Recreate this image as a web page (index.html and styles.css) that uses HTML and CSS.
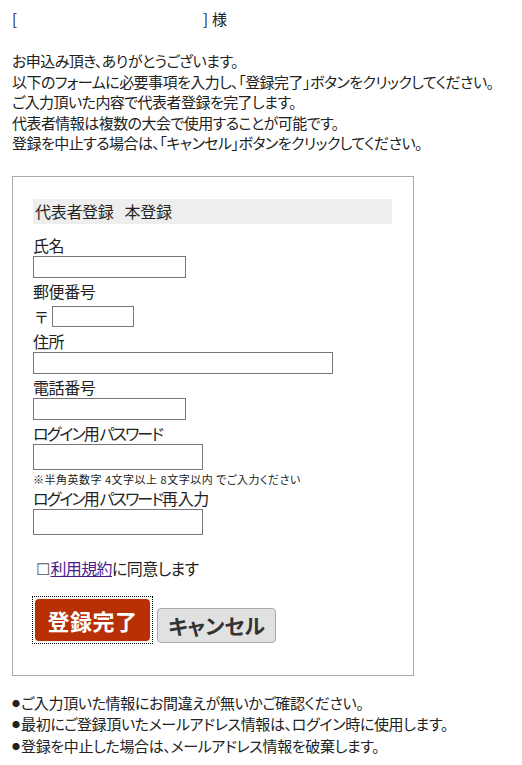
FILE: index.html
```html
<!DOCTYPE html>
<html lang="ja">
<head>
<meta charset="utf-8">
<link rel="stylesheet" href="styles.css">
</head>
<body>
<div class="page">
  <p class="name-line"><span class="br-open">[</span><span class="br-close">]</span> 様</p>
  <div class="intro">
    <p>お申込み頂き、ありがとうございます。</p>
    <p>以下のフォームに必要事項を入力し、「登録完了」ボタンをクリックしてください。</p>
    <p>ご入力頂いた内容で代表者登録を完了します。</p>
    <p>代表者情報は複数の大会で使用することが可能です。</p>
    <p>登録を中止する場合は、「キャンセル」ボタンをクリックしてください。</p>
  </div>
  <div class="box">
    <div class="heading"><span>代表者登録</span><span>本登録</span></div>
    <div class="label">氏名</div>
    <input class="field w153" type="text">
    <div class="label">郵便番号</div>
    <div class="zip-row"><span class="zip-mark">〒</span><input class="field w82 h21" type="text"></div>
    <div class="label">住所</div>
    <input class="field w300" type="text">
    <div class="label">電話番号</div>
    <input class="field w153" type="text">
    <div class="label"><span class="kana">ログイン</span>用<span class="kana">パスワード</span></div>
    <input class="field w170 h26" type="password">
    <div class="note">※半角英数字 4文字以上 8文字以内 でご入力ください</div>
    <div class="label"><span class="kana">ログイン</span>用<span class="kana">パスワード</span>再入力</div>
    <input class="field w170 h26" type="password">
    <div class="agree"><span class="chk">☐</span><a class="terms" href="#">利用規約</a>に同意します</div>
    <div class="buttons">
      <span class="focus-ring"><button class="btn-submit" type="button">登録完了</button></span>
      <button class="btn-cancel" type="button">キャンセル</button>
    </div>
  </div>
  <div class="notes">
    <p><span class="dot">●</span>ご入力頂いた情報にお間違えが無いかご確認ください。</p>
    <p><span class="dot">●</span>最初にご登録頂いたメールアドレス情報は、ログイン時に使用します。</p>
    <p><span class="dot">●</span>登録を中止した場合は、メールアドレス情報を破棄します。</p>
  </div>
</div>
</body>
</html>
```

FILE: styles.css
```css
* { box-sizing: border-box; }
html, body { margin: 0; padding: 0; background: #fff; }
body {
  font-family: "Noto Sans CJK JP", "Noto Sans", sans-serif;
  font-feature-settings: "palt";
  color: #222;
  font-size: 15px;
}
p { margin: 0; }
.page { padding: 9px 12px 0 12px; }
.name-line { line-height: 20px; display: flex; color: #222; white-space: nowrap; }
.br-open { width: 191px; color: #222; }
.br-close { margin-right: 4px; }
.intro { margin-top: 22px; line-height: 20.5px; letter-spacing: -0.55px; white-space: nowrap; }
.box {
  margin-top: 22px;
  width: 402px;
  height: 500px;
  border: 1px solid #aaa;
  padding: 22px 20px 0 20px;
}
.heading {
  background: #eee;
  width: 359px;
  height: 25px;
  font-size: 16px;
  line-height: 25px;
  padding-left: 2px;
  display: flex;
  gap: 11px;
  margin-bottom: 10px;
  letter-spacing: -0.3px;
}
.label { font-size: 16px; line-height: 22px; letter-spacing: -0.4px; }
.kana { letter-spacing: -1.9px; }
.field {
  display: block;
  height: 22px;
  border: 1px solid #767676;
  border-radius: 0;
  padding: 0;
  margin: 0 0 2px 0;
  background: #fff;
}
.w153 { width: 153px; }
.w82 { width: 82px; }
.w300 { width: 300px; }
.w170 { width: 170px; }
.h21 { height: 21px; }
.h26 { height: 26px; }
.zip-row { display: flex; align-items: center; height: 25px; margin: 2px 0 1px; }
.zip-row .field { margin: 0; }
.zip-mark { font-size: 15px; width: 19px; padding-left: 2px; }
.note { font-size: 11px; line-height: 16px; margin-top: -1px; letter-spacing: 0.5px; white-space: nowrap; }
.agree { font-size: 16px; line-height: 22px; margin-top: 22px; display: flex; align-items: center; letter-spacing: -0.6px; }
.chk { color: #555; font-size: 16px; margin-left: 3px; margin-right: 1px; }
.terms { color: #4b1a8f; text-decoration: underline; }
.buttons { margin-top: 17px; display: flex; align-items: flex-end; gap: 4px; }
.focus-ring {
  display: inline-block;
  border: 1px dotted #000;
  padding: 2px;
  margin-left: -1px;
}
.btn-submit {
  display: block;
  width: 115px;
  height: 42px;
  background: #b73006;
  color: #fff;
  border: none;
  border-radius: 4px;
  font-family: inherit;
  font-feature-settings: "palt";
  font-size: 22px;
  font-weight: bold;
  letter-spacing: 0.5px;
  padding: 0;
}
.btn-cancel {
  width: 119px;
  height: 35px;
  margin-bottom: 1px;
  background: #e1e1e1;
  color: #333;
  border: 1px solid #aaa;
  border-radius: 4px;
  font-family: inherit;
  font-feature-settings: "palt";
  font-size: 21px;
  font-weight: bold;
  padding: 0;
}
.notes { margin-top: 17px; line-height: 20.5px; letter-spacing: -0.35px; white-space: nowrap; }
.dot { font-size: 8px; vertical-align: 2px; margin-right: 1px; letter-spacing: 0; }
```
